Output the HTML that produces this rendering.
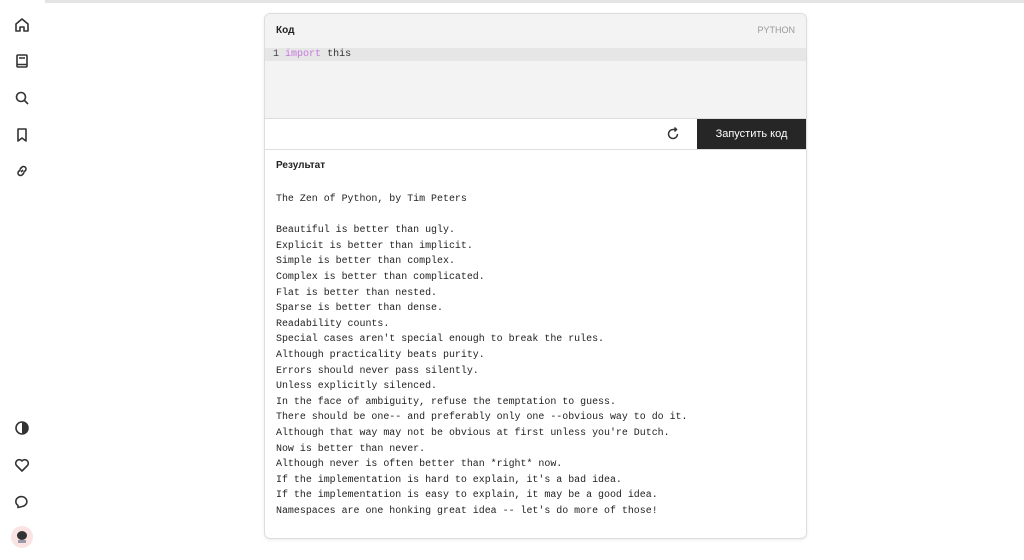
<!DOCTYPE html><html><head><meta charset="utf-8"><style>
body{margin:0;width:1024px;height:560px;background:#fff;font-family:"Liberation Sans",sans-serif;position:relative;overflow:hidden}
.top{position:absolute;left:45px;top:0;right:0;height:3px;background:#e4e4e4}
.ic{position:absolute;left:13px}
.card{position:absolute;left:264px;top:13px;width:541px;height:524px;border:1px solid #ddd;border-radius:6px;overflow:hidden;box-shadow:0 1px 3px rgba(0,0,0,.08)}
.hd{height:104px;background:#f3f3f3;position:relative;border-bottom:1px solid #ddd}
.t{position:absolute;left:11px;font-size:10px;font-weight:bold;color:#222}
.py{position:absolute;right:11px;top:11px;font-size:9px;color:#999}
.ln{position:absolute;left:0;right:0;top:34px;height:13px;background:#e6e6e6;font:10px "Liberation Mono",monospace;line-height:13px;color:#333;padding-left:2px}
.tb{height:30px;border-bottom:1px solid #ddd;position:relative}
.btn{position:absolute;right:0;top:0;width:109px;height:30px;background:#262626;color:#fff;font-size:11px;text-align:center;line-height:30px}
pre{position:absolute;left:11px;top:177px;margin:0;font:9.95px/15.6px "Liberation Mono",monospace;color:#222}
</style></head><body>
<div class="top"></div>
<svg class="ic" style="top:16px" width="18" height="18" viewBox="0 0 18 18" fill="none" stroke="#333" stroke-width="1.6"><path d="M3 8L9 3l6 5v7h-4v-4H7v4H3z" stroke-linejoin="round"/></svg>
<svg class="ic" style="top:52px" width="18" height="18" viewBox="0 0 18 18" fill="none" stroke="#333" stroke-width="1.6"><rect x="4" y="3" width="10" height="12" rx="1"/><path d="M6 6h6M4 12.5h10"/></svg>
<svg class="ic" style="top:89px" width="18" height="18" viewBox="0 0 18 18" fill="none" stroke="#333" stroke-width="1.6"><circle cx="8" cy="8" r="4.5"/><path d="M11.5 11.5L15 15"/></svg>
<svg class="ic" style="top:126px" width="18" height="18" viewBox="0 0 18 18" fill="none" stroke="#333" stroke-width="1.6"><path d="M5 3h8v12l-4-3-4 3z" stroke-linejoin="round"/></svg>
<svg class="ic" style="top:162px" width="18" height="18" viewBox="0 0 18 18" fill="none" stroke="#333" stroke-width="1.6"><path d="M8 10l2-2M7 7l2-2a2.5 2.5 0 013.5 3.5l-2 2M11 11l-2 2a2.5 2.5 0 01-3.5-3.5l2-2"/></svg>
<svg class="ic" style="top:419px" width="18" height="18" viewBox="0 0 18 18"><circle cx="9" cy="9" r="6" fill="none" stroke="#333" stroke-width="1.6"/><path d="M9 3a6 6 0 010 12z" fill="#333"/></svg>
<svg class="ic" style="top:456px" width="18" height="18" viewBox="0 0 18 18" fill="none" stroke="#333" stroke-width="1.6"><path d="M9 15L3.5 9.5A3 3 0 019 5a3 3 0 015.5 4.5z" stroke-linejoin="round"/></svg>
<svg class="ic" style="top:492px" width="18" height="18" viewBox="0 0 18 18" fill="none" stroke="#333" stroke-width="1.6"><path d="M5 13.5A5.5 5 0 119 14.5l-4 1z" stroke-linejoin="round"/></svg>
<div style="position:absolute;left:11px;top:526px;width:22px;height:22px;border-radius:50%;background:#fbe3e3"><div style="position:absolute;left:6px;top:5px;width:10px;height:9px;border-radius:50%;background:#333"></div><div style="position:absolute;left:7px;top:14px;width:8px;height:3px;background:#99a"></div></div>
<div class="card">
<div class="hd"><div class="t" style="top:11px">Код</div><div class="py">PYTHON</div>
<div class="ln">&nbsp;<span style="color:#444">1</span> <span style="color:#c678dd">import</span> this</div></div>
<div class="tb"><svg style="position:absolute;left:399px;top:6px" width="18" height="18" viewBox="0 0 18 18" fill="none" stroke="#333" stroke-width="1.5"><path d="M13.5 9A4.5 4.5 0 119 4.5h3"/><path d="M10.5 2.5l2 2-2 2" fill="#333"/></svg><div class="btn">Запустить код</div></div>
<div class="t" style="top:146px">Результат</div>
<pre>The Zen of Python, by Tim Peters

Beautiful is better than ugly.
Explicit is better than implicit.
Simple is better than complex.
Complex is better than complicated.
Flat is better than nested.
Sparse is better than dense.
Readability counts.
Special cases aren't special enough to break the rules.
Although practicality beats purity.
Errors should never pass silently.
Unless explicitly silenced.
In the face of ambiguity, refuse the temptation to guess.
There should be one-- and preferably only one --obvious way to do it.
Although that way may not be obvious at first unless you're Dutch.
Now is better than never.
Although never is often better than *right* now.
If the implementation is hard to explain, it's a bad idea.
If the implementation is easy to explain, it may be a good idea.
Namespaces are one honking great idea -- let's do more of those!</pre>
</div>
</body></html>
